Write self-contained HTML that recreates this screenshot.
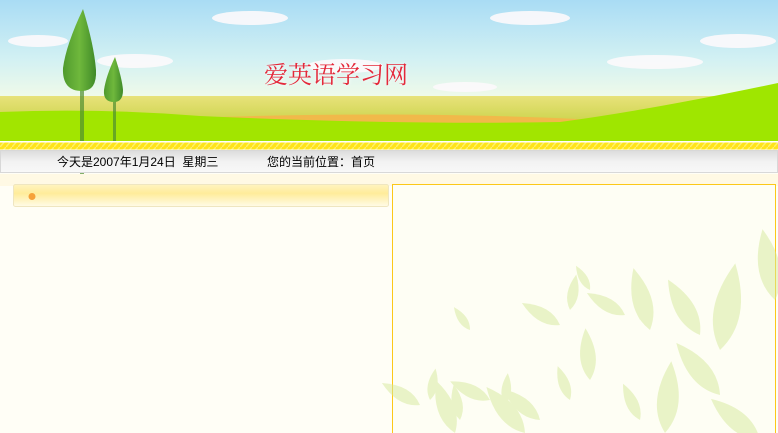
<!DOCTYPE html>
<html><head><meta charset="utf-8"><style>
*{margin:0;padding:0}
body{width:778px;height:433px;overflow:hidden;background:#fffef6;font-family:"Liberation Sans","Noto Sans CJK SC",sans-serif;position:relative}
.abs{position:absolute}
</style></head><body>
<svg class="abs" style="left:0;top:0" width="778" height="433">
<defs>
<linearGradient id="sky" x1="0" y1="0" x2="0" y2="1">
<stop offset="0" stop-color="#a9dcf4"/><stop offset="0.6" stop-color="#d3f1f3"/><stop offset="1" stop-color="#f2fbe8"/></linearGradient>
<linearGradient id="field" x1="0" y1="0" x2="0" y2="1">
<stop offset="0" stop-color="#e8e27a"/><stop offset="1" stop-color="#c8d247"/></linearGradient>
<linearGradient id="bar" x1="0" y1="0" x2="0" y2="1">
<stop offset="0" stop-color="#dcdcdc"/><stop offset="0.5" stop-color="#f2f2f2"/><stop offset="1" stop-color="#f8f8f8"/></linearGradient>
<linearGradient id="hb" x1="0" y1="0" x2="0" y2="1">
<stop offset="0" stop-color="#fff4c0"/><stop offset="0.4" stop-color="#ffec9a"/><stop offset="1" stop-color="#fffbe8"/></linearGradient>
<linearGradient id="tree" x1="0" y1="0" x2="1" y2="0">
<stop offset="0" stop-color="#4f9a2e"/><stop offset="0.5" stop-color="#6fb83c"/><stop offset="1" stop-color="#3f8a28"/></linearGradient>
<pattern id="st" width="6" height="7" patternUnits="userSpaceOnUse"><rect width="6" height="7" fill="#ffe41a"/><path d="M0 7L6 0" stroke="#fff06a" stroke-width="1.5"/></pattern>
<path id="lf" d="M0 0 Q12 -16 0 -40 Q-12 -16 0 0Z"/>
</defs>
<rect width="778" height="100" fill="url(#sky)"/>
<g fill="#fdfafc" opacity="0.9">
<ellipse cx="38" cy="41" rx="30" ry="6"/><ellipse cx="135" cy="61" rx="38" ry="7"/><ellipse cx="250" cy="18" rx="38" ry="7"/>
<ellipse cx="345" cy="66" rx="38" ry="7"/><ellipse cx="465" cy="87" rx="32" ry="5"/><ellipse cx="530" cy="18" rx="40" ry="7"/>
<ellipse cx="655" cy="62" rx="48" ry="7"/><ellipse cx="738" cy="41" rx="38" ry="7"/><ellipse cx="617" cy="117" rx="48" ry="8" opacity="0.6"/>
</g>
<rect y="96" width="778" height="30" fill="url(#field)"/>
<path d="M190 118 Q400 110 600 120 L600 130 L190 130Z" fill="#f1b94a"/>
<path d="M0 112 Q100 108 200 116 Q400 125 560 122 Q650 110 778 83 L778 142 L0 142Z" fill="#9fe600"/>
<path d="M0 120 Q200 118 560 126 L560 142 L0 142Z" fill="#a2e500"/>
<rect x="80" y="80" width="4" height="95" fill="#4e8f30" opacity="0.7"/>
<path d="M83 9 Q94 45 96 70 Q97 91 82 91 Q62 91 63 68 Q66 45 83 9Z" fill="url(#tree)"/>
<rect x="113" y="98" width="3" height="72" fill="#4e8f30" opacity="0.7"/>
<path d="M115 57 Q122 78 123 90 Q123 102 114 102 Q103 102 104 90 Q106 76 115 57Z" fill="url(#tree)"/>
<rect y="141" width="778" height="1.5" fill="#fff"/>
<rect y="142.5" width="778" height="7" fill="url(#st)"/>
<rect y="149.5" width="778" height="1" fill="#fff"/>
<rect x="0.5" y="150.5" width="777" height="22" fill="url(#bar)" stroke="#d8d8d8"/>
<rect y="174" width="778" height="12" fill="#fff9e4"/>
<rect x="13.5" y="184.5" width="375" height="22" rx="2" fill="url(#hb)" stroke="#efe6c0"/>
<circle cx="32" cy="196.5" r="3.5" fill="#f6a23a"/>
<rect x="392.5" y="184.5" width="383" height="260" fill="#fefef4" stroke="#fcc818"/>
<g fill="#d6ea9c" opacity="0.5">
<use href="#lf" transform="translate(420,405) rotate(-60) scale(1.1)"/>
<use href="#lf" transform="translate(430,400) rotate(10) scale(0.8)"/>
<use href="#lf" transform="translate(490,400) rotate(-65) scale(1.1)"/>
<use href="#lf" transform="translate(505,405) rotate(5) scale(0.8)"/>
<use href="#lf" transform="translate(540,420) rotate(-50) scale(1.2)"/>
<use href="#lf" transform="translate(460,420) rotate(-10) scale(0.9)"/>
<use href="#lf" transform="translate(470,330) rotate(-35) scale(0.7)"/>
<use href="#lf" transform="translate(560,325) rotate(-60) scale(1.1)"/>
<use href="#lf" transform="translate(570,310) rotate(10) scale(0.9)"/>
<use href="#lf" transform="translate(590,290) rotate(-30) scale(0.7)"/>
<use href="#lf" transform="translate(625,315) rotate(-60) scale(1.1)"/>
<use href="#lf" transform="translate(640,320) rotate(5) scale(0.9)"/>
<use href="#lf" transform="translate(590,380) rotate(-5) scale(1.3)"/>
<use href="#lf" transform="translate(650,330) rotate(-15) scale(1.6)"/>
<use href="#lf" transform="translate(700,335) rotate(-30) scale(1.6)"/>
<use href="#lf" transform="translate(720,350) rotate(10) scale(2.2)"/>
<use href="#lf" transform="translate(720,395) rotate(-40) scale(1.7)"/>
<use href="#lf" transform="translate(570,400) rotate(-20) scale(0.9)"/>
<use href="#lf" transform="translate(640,420) rotate(-25) scale(1.0)"/>
<use href="#lf" transform="translate(665,433) rotate(5) scale(1.8)"/>
<use href="#lf" transform="translate(760,440) rotate(-50) scale(1.6)"/>
<use href="#lf" transform="translate(775,300) rotate(-10) scale(1.8)"/>
<use href="#lf" transform="translate(455,433) rotate(-20) scale(1.4)"/>
<use href="#lf" transform="translate(525,433) rotate(-40) scale(1.5)"/>
</g>
</svg>
<div class="abs" style="left:264px;top:59px;font-size:24px;color:#e4283a;font-family:'Noto Serif CJK SC',serif;text-shadow:0 0 4px #fff;line-height:28px">爱英语学习网</div>
<div class="abs" style="left:57px;top:154px;font-size:12px;color:#000;line-height:16px">今天是2007年1月24日&nbsp; 星期三</div>
<div class="abs" style="left:267px;top:154px;font-size:12px;color:#000;line-height:16px">您的当前位置：首页</div>
</body></html>
